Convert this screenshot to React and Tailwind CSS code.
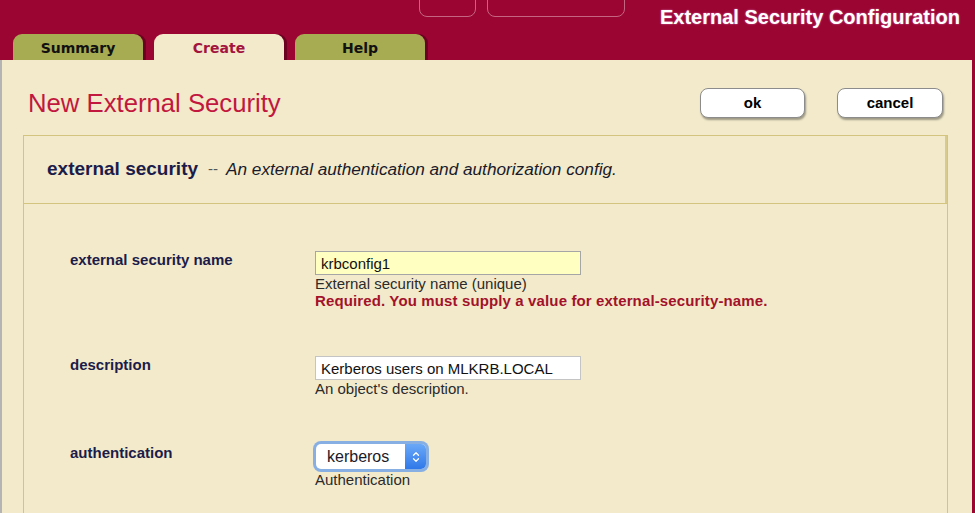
import { ChevronUp, ChevronDown } from 'lucide-react'

const tabs = [
  { label: 'Summary', active: false },
  { label: 'Create', active: true },
  { label: 'Help', active: false },
]

const Tab = ({ label, active }) => (
  <div
    className={`w-[130px] h-[26px] pt-[2px] rounded-t-[9px] flex items-center justify-center font-['DejaVu_Sans',Verdana,sans-serif] text-[14px] font-bold shadow-[3px_0_0_#6c0222] ${
      active ? 'bg-[#f2eacb] text-[#a3143e]' : 'bg-[#a7ab52] text-[#111]'
    }`}
  >
    {label}
  </div>
)

const Field = ({ label, children }) => (
  <div className="flex items-start">
    <div className="w-[245px] text-[15px] leading-[17px] font-bold text-[#1c1c4a]">{label}</div>
    <div className="flex flex-col">{children}</div>
  </div>
)

const Help = ({ children }) => (
  <div className="text-[15px] leading-[17px] text-[#2b2b2b]">{children}</div>
)

const App = () => {
  return (
    <div className="w-[975px] h-[513px] overflow-hidden bg-[#9b0532] flex flex-col font-['Liberation_Sans',Arial,sans-serif]">
      {/* top bar */}
      <div className="h-[34px] flex items-start shrink-0">
        <div className="ml-[419px] mt-[-12px] h-[29px] w-[57px] rounded-[8px] border border-[#c66582]" />
        <div className="ml-[11px] mt-[-12px] h-[29px] w-[138px] rounded-[8px] border border-[#c66582]" />
        <h1 className="ml-auto mr-[15px] mt-[7px] text-[20px] leading-[20px] font-bold text-white [text-shadow:0_0_2px_rgba(230,140,210,0.8)]">
          External Security Configuration
        </h1>
      </div>
      <div className="h-[26px] flex items-end gap-[11px] pl-[13px] shrink-0">
        {tabs.map((t) => (
          <Tab key={t.label} {...t} />
        ))}
      </div>

      {/* main */}
      <div className="flex-1 bg-[#f2eacb] border-l-2 border-[#b4b4b4] mr-[3px] flex flex-col">
        <div className="mt-[28px] h-[30px] pl-[26px] pr-[29px] flex items-center justify-between">
          <h2 className="text-[25.7px] leading-[30px] text-[#c2173f]">New External Security</h2>
          <div className="flex gap-[32px]">
            <button className="w-[105px] h-[30px] bg-white rounded-[8px] border border-[#8c8c8c] shadow-[1px_2px_2px_rgba(0,0,0,0.35)] text-[15px] font-bold text-black">
              ok
            </button>
            <button className="w-[106px] h-[30px] bg-white rounded-[8px] border border-[#8c8c8c] shadow-[1px_2px_2px_rgba(0,0,0,0.35)] text-[15px] font-bold text-black">
              cancel
            </button>
          </div>
        </div>

        <div className="mt-[17px] ml-[21px] mr-[24px] border border-[#d3c47f] flex flex-col">
          <div className="h-[68px] border-b border-[#d3c47f] shadow-[inset_-2px_0_0_#d8cb8c] flex items-center pl-[23px] text-[#1c1c4a]">
            <span className="text-[19px] font-bold">external security</span>
            <span className="ml-[10px] mr-[8px] text-[15px] text-[#555]">--</span>
            <span className="text-[17.2px] italic text-[#1a1a2a]">
              An external authentication and authorization config.
            </span>
          </div>

          <div className="pt-[47px] pl-[46px] pb-[60px] flex flex-col gap-[47px]">
            <Field label="external security name">
              <input
                readOnly
                value="krbconfig1"
                className="w-[266px] h-[24px] bg-[#ffffc2] border border-[#a6a6a6] px-[5px] text-[15px] text-[#111] outline-none"
              />
              <Help>External security name (unique)</Help>
              <div className="text-[15px] leading-[17px] tracking-[0.13px] font-bold text-[#a3122a]">
                Required. You must supply a value for external-security-name.
              </div>
            </Field>

            <Field label="description">
              <input
                readOnly
                value="Kerberos users on MLKRB.LOCAL"
                className="w-[266px] h-[24px] bg-white border border-[#c4c4c4] px-[5px] text-[15px] text-[#111] outline-none"
              />
              <Help>An object's description.</Help>
            </Field>

            <Field label="authentication">
              <div className="ml-[1px] w-[110px] h-[25px] flex rounded-[5px] bg-white shadow-[0_0_0_3px_rgba(100,155,235,0.75)] overflow-hidden">
                <span className="flex-1 pl-[11px] text-[16px] leading-[25px] text-[#1a1a2a]">kerberos</span>
                <span className="w-[21px] flex flex-col items-center justify-center bg-gradient-to-b from-[#6aa8f7] to-[#2f78ea] text-white">
                  <ChevronUp size={10} strokeWidth={3} className="-mb-[2px]" />
                  <ChevronDown size={10} strokeWidth={3} className="-mt-[2px]" />
                </span>
              </div>
              <div className="mt-[2px]">
                <Help>Authentication</Help>
              </div>
            </Field>
          </div>
        </div>
      </div>
    </div>
  )
}

export default App
